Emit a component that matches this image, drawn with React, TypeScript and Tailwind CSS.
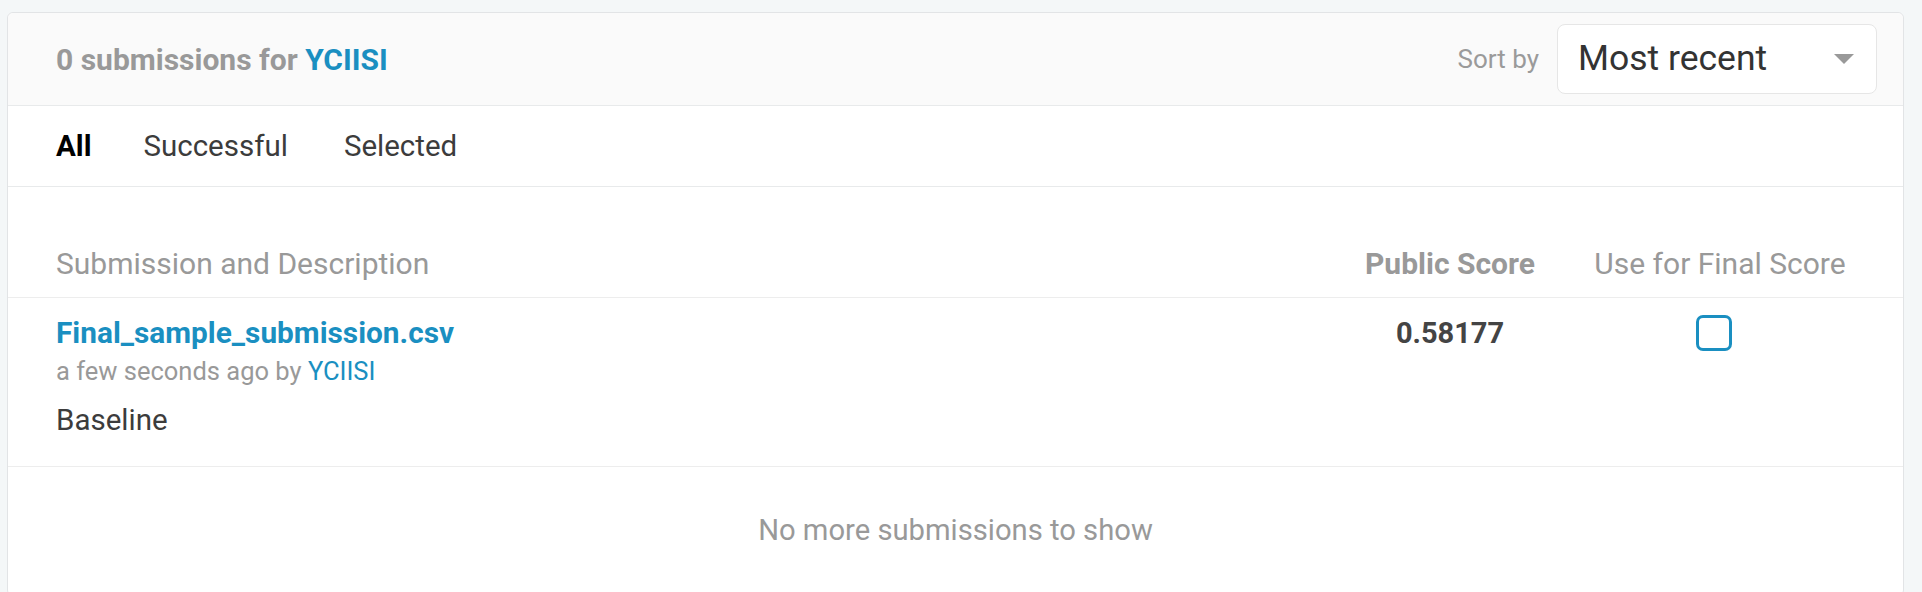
import React from "react";

export default function App() {
  return (
    <div
      className="h-[592px] w-[1922px] overflow-hidden bg-[#f4f7f8] pt-[12px] pl-[7px] pr-[18px]"
      style={{ fontFamily: "Roboto, 'Liberation Sans', sans-serif" }}
    >
      <div className="rounded-[6px] border border-[#e2e4e6] bg-white">
        {/* Header */}
        <div className="flex h-[93px] items-center justify-between rounded-t-[6px] border-b border-[#e8eaeb] bg-[#fafafa] pl-[48px] pr-[26px]">
          <div className="text-[30px] font-bold text-[#999999]">
            0 submissions for <span className="text-[#1a8fc1]">YCIISI</span>
          </div>
          <div className="flex items-center gap-[18px]">
            <span className="text-[26px] text-[#9a9a9a]">Sort by</span>
            <div className="flex h-[70px] w-[320px] items-center justify-between rounded-[8px] border border-[#e6e6e6] bg-white pl-[20px] pr-[22px]">
              <span className="text-[35.5px] text-[#333333]">Most recent</span>
              <svg width="20" height="10" viewBox="0 0 20 10">
                <polygon points="0,0 20,0 10,10" fill="#999999" />
              </svg>
            </div>
          </div>
        </div>

        {/* Tabs */}
        <div className="flex h-[81px] items-center border-b border-[#e8eaeb] pl-[48px] text-[29.5px]">
          <span className="font-bold text-black">All</span>
          <span className="ml-[52px] text-[#3c3c3c]">Successful</span>
          <span className="ml-[56px] text-[#3c3c3c]">Selected</span>
        </div>

        {/* Table header */}
        <div className="grid h-[111px] grid-cols-[1fr_200px_260px] items-end gap-x-[40px] border-b border-[#ededed] pl-[48px] pr-[53px] pb-[15px] text-[30px] leading-[36px]">
          <span className="text-[#999999]">Submission and Description</span>
          <span className="text-center font-bold text-[#999999]">Public Score</span>
          <span className="text-center text-[#999999]">Use for Final Score</span>
        </div>

        {/* Row */}
        <div className="grid h-[169px] grid-cols-[1fr_200px_260px] gap-x-[40px] border-b border-[#ededed] pl-[48px] pr-[53px] pt-[17px]">
          <div className="flex flex-col">
            <span className="text-[29.8px] font-bold leading-[36px] text-[#1a8fc1]">
              Final_sample_submission.csv
            </span>
            <span className="mt-[2px] text-[25.5px] leading-[36px] text-[#999999]">
              a few seconds ago by <span className="text-[#1a8fc1]">YCIISI</span>
            </span>
            <span className="mt-[13px] text-[29.5px] leading-[36px] text-[#3c3c3c]">Baseline</span>
          </div>
          <div className="text-center text-[29px] font-bold leading-[36px] text-[#444444]">0.58177</div>
          <div className="flex justify-center pr-[12px]">
            <div className="h-[36px] w-[36px] rounded-[7px] border-[3px] border-[#1a8fc1] bg-white" />
          </div>
        </div>

        {/* Footer */}
        <div className="flex h-[128px] items-center justify-center text-[29.2px] text-[#999999]">
          No more submissions to show
        </div>
      </div>
    </div>
  );
}
